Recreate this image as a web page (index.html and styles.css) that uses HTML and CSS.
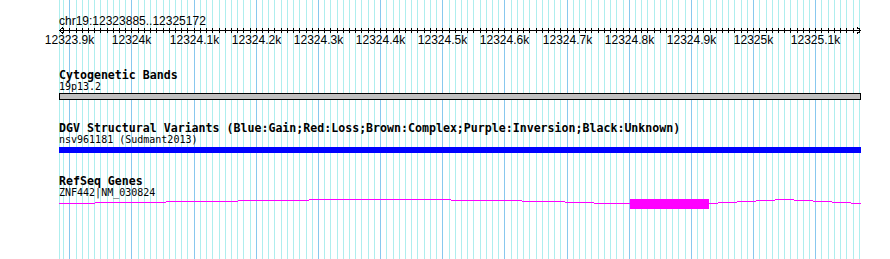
FILE: index.html
```html
<!DOCTYPE html>
<html lang="en">
<head>
<meta charset="UTF-8">
<title>Genome view</title>
<link rel="stylesheet" href="styles.css">
</head>
<body>
<div class="view">
  <svg class="grid" id="grid" width="890" height="259"></svg>
  <div class="ruler">
    <div class="loc">chr19:12323885..12325172</div>
    <svg class="axis" id="axis" width="890" height="20"></svg>
  </div>
  <div class="track">
    <div class="track-title">Cytogenetic Bands</div>
    <div class="feat-label">19p13.2</div>
    <div class="band"></div>
  </div>
  <div class="track">
    <div class="track-title">DGV Structural Variants (Blue:Gain;Red:Loss;Brown:Complex;Purple:Inversion;Black:Unknown)</div>
    <div class="feat-label">nsv961181 (Sudmant2013)</div>
    <div class="variant"></div>
  </div>
  <div class="track">
    <div class="track-title">RefSeq Genes</div>
    <div class="feat-label">ZNF442|NM_030824</div>
    <svg class="gene" id="gene" width="890" height="14"></svg>
  </div>
</div>
<script>
var NS="http://www.w3.org/2000/svg";
var start=12323885, end=12325172;
var left=60, width=800;

function toX(p){
  return Math.round(left+(p-start)*width/(end-start));
}
function rect(svg,x,y,w,h,fill){
  var r=document.createElementNS(NS,"rect");
  r.setAttribute("x",x);r.setAttribute("y",y);
  r.setAttribute("width",w);r.setAttribute("height",h);
  r.setAttribute("fill",fill);
  svg.appendChild(r);
}

// grid + ruler ticks
var grid=document.getElementById("grid");
var axis=document.getElementById("axis");
rect(grid,59,0,1,259,"#aeeeee");
for(var p=Math.ceil(start/10)*10;p<=end;p+=10){
  var x=toX(p);
  var major=(p%100==0);
  rect(grid,x,0,1,259,major?"#88c8ee":"#aeeeee");
  rect(axis,x,1,1,5,"#000");
  if(major){
    var t=document.createElementNS(NS,"text");
    t.setAttribute("x",x+0.5);
    t.setAttribute("y",17);
    t.setAttribute("text-anchor","middle");
    t.textContent=(p%1000==0)?(p/1000)+"k":(p/1000).toFixed(1)+"k";
    axis.appendChild(t);
  }
}
rect(axis,59,3,802,1,"#000");
var arrows=["63,0.5 59.5,3.5 63,6.5","857,0.5 860.5,3.5 857,6.5"];
for(var i=0;i<arrows.length;i++){
  var a=document.createElementNS(NS,"polyline");
  a.setAttribute("points",arrows[i]);
  a.setAttribute("class","arrow");
  axis.appendChild(a);
}

// gene model: [x1, x2, row]
var gene=document.getElementById("gene");
var top0=197;
var segs=[[59,95,203],[95,166,202],[166,238,201],[238,309,200],[309,451,199],
  [451,522,200],[522,565,201],[565,594,202],[594,630,203],[709,718,203],
  [718,737,202],[737,756,201],[756,775,200],[775,794,199],[794,813,200],
  [813,832,201],[832,851,202],[851,861,203]];
for(var j=0;j<segs.length;j++){
  rect(gene,segs[j][0],segs[j][2]-top0,segs[j][1]-segs[j][0],1,"#ff00ff");
}
rect(gene,630,199-top0,79,10,"#ff00ff");
</script>
</body>
</html>
```

FILE: styles.css
```css
body{margin:0;background:#ffffff;}
.view{
position:relative;width:890px;height:259px;overflow:hidden;
font-family:"DejaVu Sans Mono","Liberation Mono",monospace;color:#000;
}
.grid{position:absolute;left:0;top:0;}
.ruler,.track{position:relative;}
/* ruler */
.loc{
padding:15px 0 0 59px;
font:12px/12px "Liberation Sans",Arial,sans-serif;
}
.axis{display:block;}
.axis text{font:12px "Liberation Sans",Arial,sans-serif;fill:#000;}
.axis .arrow{fill:none;stroke:#000;stroke-width:1;shape-rendering:crispEdges;}
/* tracks */
.track{margin-top:22px;}
.track-title{
padding-left:59px;
font-weight:bold;font-size:11.6px;line-height:12px;
white-space:nowrap;
}
.feat-label{
padding-left:59px;
font-size:10px;line-height:12px;
white-space:nowrap;
}
.band{
margin-left:59px;width:800px;height:5px;
background:#c0c0c0;border:1px solid #000;
}
.variant{
margin:1px 0 0 59px;width:802px;height:6px;
background:#0000ff;
}
.gene{display:block;margin-top:-2px;}
```
